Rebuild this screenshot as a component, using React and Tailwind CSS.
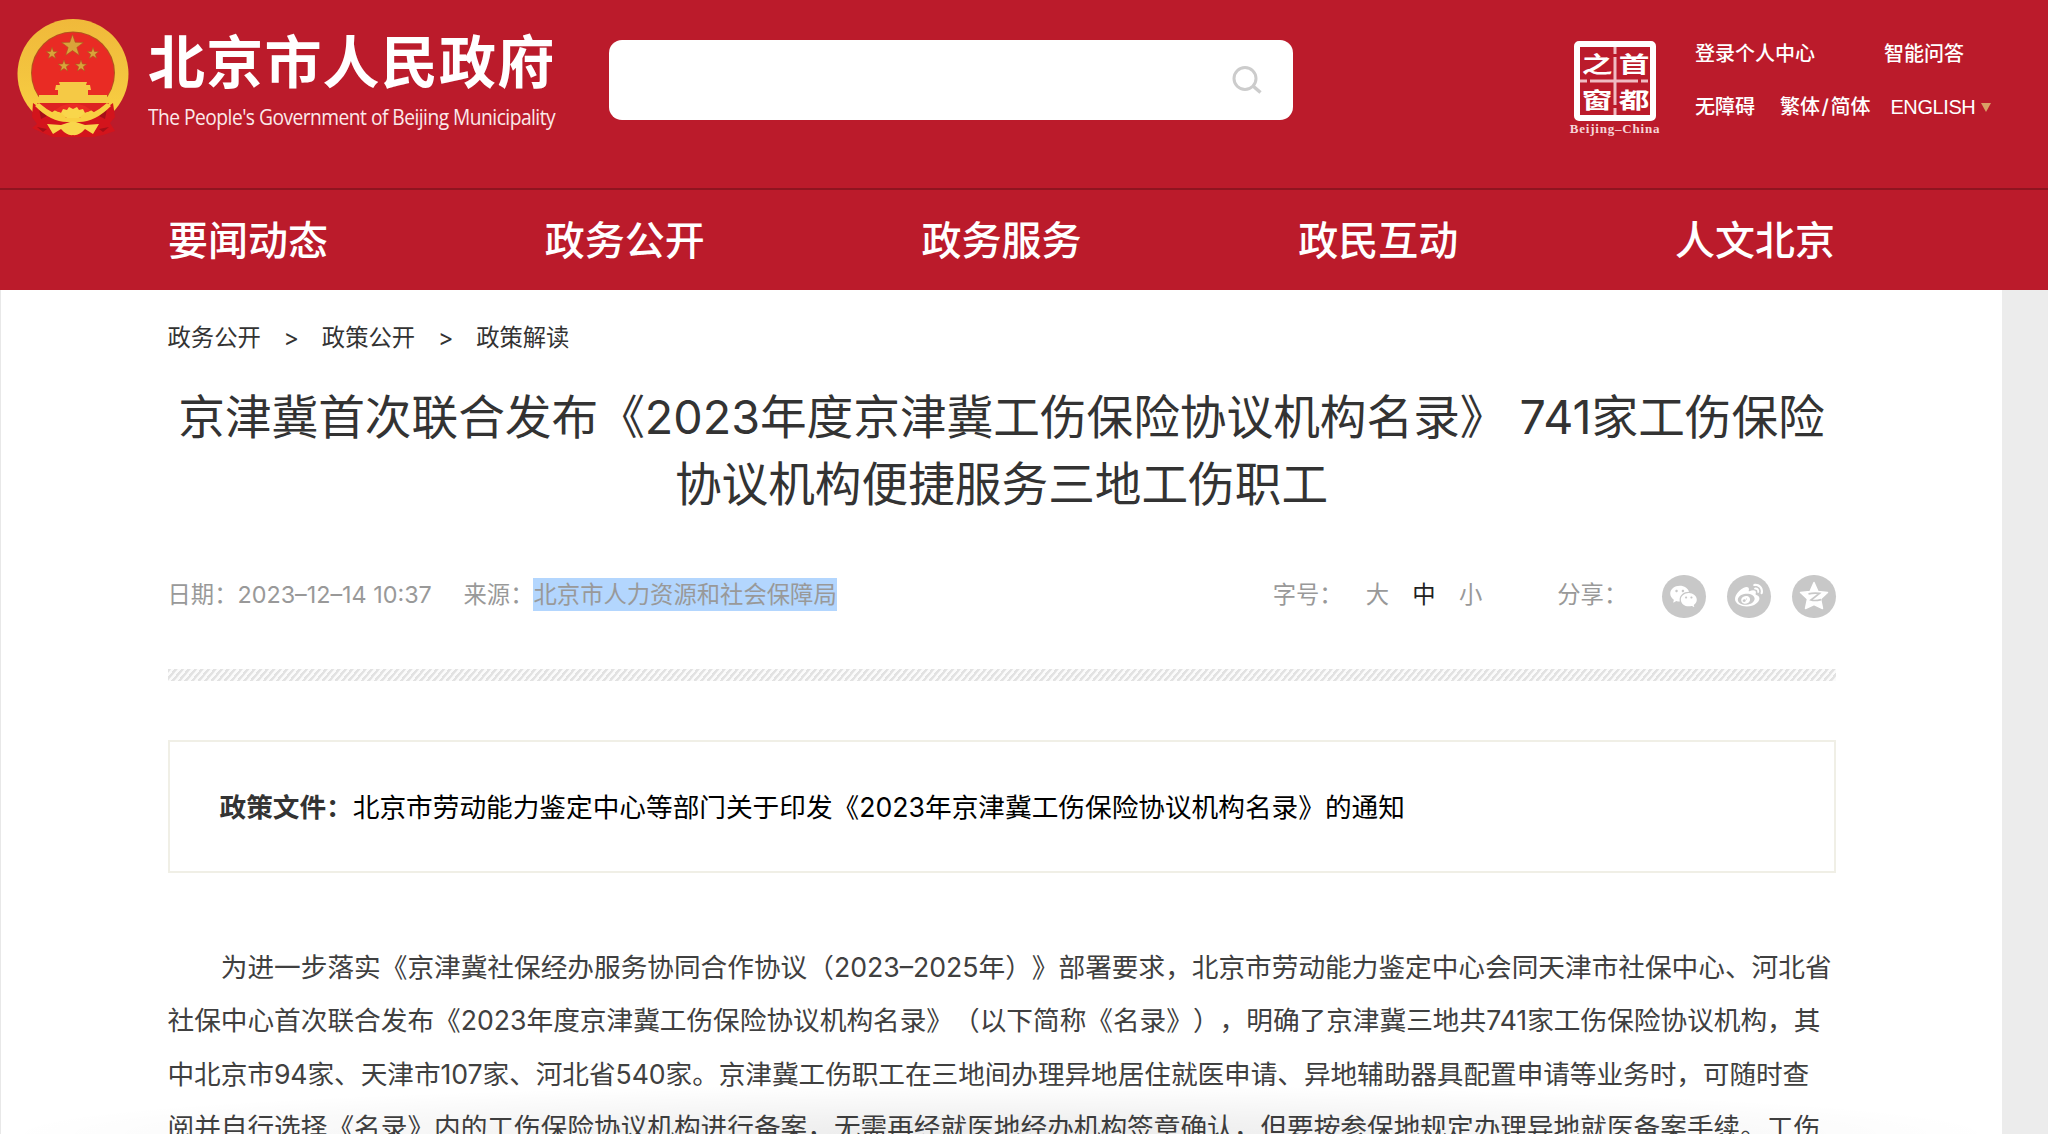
import { RiWechatFill } from "react-icons/ri";
import { FaWeibo } from "react-icons/fa";

const navItems = ["要闻动态", "政务公开", "政务服务", "政民互动", "人文北京"];
const crumbs = ["政务公开", "政策公开", "政策解读"];

const emblemStars = [
  { x: 53.5, y: 27, r: 11.5 },
  { x: 33, y: 34.5, r: 6.2 },
  { x: 74, y: 34.5, r: 6.2 },
  { x: 45, y: 47, r: 6.2 },
  { x: 62, y: 47, r: 6.2 },
];

const paragraph = [
  { text: "为进一步落实《京津冀社保经办服务协同合作协议（2023–2025年）》部署要求，北京市劳动能力鉴定中心会同天津市社保中心、河北省", className: "pl-[53.3px]" },
  { text: "社保中心首次联合发布《2023年度京津冀工伤保险协议机构名录》（以下简称《名录》），明确了京津冀三地共741家工伤保险协议机构，其", className: "" },
  { text: "中北京市94家、天津市107家、河北省540家。京津冀工伤职工在三地间办理异地居住就医申请、异地辅助器具配置申请等业务时，可随时查", className: "tracking-[-0.06px]" },
  { text: "阅并自行选择《名录》内的工伤保险协议机构进行备案，无需再经就医地经办机构签章确认，但要按参保地规定办理异地就医备案手续。工伤", className: "" },
];

function starPoints(cx, cy, r) {
  return Array.from({ length: 10 }, (_, i) => {
    const radius = i % 2 ? r * 0.4 : r;
    const angle = (Math.PI / 5) * i - Math.PI / 2;
    return `${cx + radius * Math.cos(angle)},${cy + radius * Math.sin(angle)}`;
  }).join(" ");
}

function Emblem() {
  return (
    <svg className="shrink-0" width="112" height="120" viewBox="-2 0 112 120">
      <defs>
        <linearGradient id="gold" x1="0" y1="0" x2="0" y2="1">
          <stop offset="0" stopColor="#f0b93a" />
          <stop offset="0.5" stopColor="#f3c43f" />
          <stop offset="1" stopColor="#fbd343" />
        </linearGradient>
      </defs>
      <ellipse cx="54" cy="55" rx="55.5" ry="55" fill="url(#gold)" />
      <path d="M14 84 L13 98 L18 105 L13 109 L24 114 L34 118 H74 L84 116 L96 112 L91 104 L96 98 L94 84 Q84 92 72 98 H36 Q24 92 14 84Z" fill="#d3141c" />
      <path d="M20 90 L28 97 L22 100Z M88 90 L80 97 L86 100Z M18 108 L28 110 L24 113Z M90 108 L80 110 L84 113Z" fill="#a50f18" />
      <ellipse cx="54" cy="54" rx="42" ry="41.5" fill="#b3541e" />
      <ellipse cx="54" cy="54.5" rx="41" ry="41" fill="#e92b24" />
      {emblemStars.map((s) => (
        <polygon key={`${s.x}-${s.y}`} points={starPoints(s.x, s.y, s.r)} fill="#d9a33a" stroke="#a9591d" strokeWidth="0.6" />
      ))}
      <path d="M40 63 H68 L67 66 H71 L72 71 H69 V76 H88 V84 H20 V76 H39 V71 H36 L37 66 H41Z" fill="#f5c945" />
      <path d="M18 84 H90 Q84 92 76 94 L66 87 Q54 82 42 87 L32 94 Q24 92 18 84Z" fill="#dd2222" />
      <path d="M20 84 Q35 97 50 99 H58 Q73 97 88 84 L92 87 Q76 103 60 103 H48 Q32 103 16 87Z" fill="#f8cf42" />
      <path d="M42 94 L44 90 L48 91 L50 88 L54 90 L58 88 L60 91 L64 90 L66 94 L60 99 H48Z" fill="#f9d64b" />
      <path d="M28 105 L42 106 L48 104 Q54 101 60 104 L66 106 L80 105 L74 115 L66 110 Q60 117 54 116 Q48 117 42 110 L34 115Z" fill="#f9d64b" />
    </svg>
  );
}

function Seal() {
  return (
    <div className="flex w-[92px] flex-col items-center">
      <svg width="82" height="80" viewBox="0 0 82 80" fill="none" stroke="#fff">
        <rect x="3" y="3" width="76" height="74" rx="2" strokeWidth="6" />
        <path d="M41 6 V74 M6 40 H76" stroke="#f0bcc2" strokeWidth="3" strokeDasharray="7 3 48 3" />
        <g fill="#fff" stroke="none" fontFamily="Noto Sans CJK SC, sans-serif" fontWeight="700" fontSize="26" textAnchor="middle">
          <text transform="translate(23 31) scale(1.18 0.84)">之</text>
          <text transform="translate(60 31) scale(1.18 0.84)">首</text>
          <text transform="translate(23 67) scale(1.18 0.84)">窗</text>
          <text transform="translate(60 67) scale(1.18 0.84)">都</text>
        </g>
      </svg>
      <span className="mt-px font-['Liberation_Serif',serif] text-[13px] leading-[13px] font-bold tracking-[0.8px] whitespace-nowrap text-[#f6d5d8]">
        Beijing–China
      </span>
    </div>
  );
}

function QzoneIcon() {
  return (
    <svg width="30" height="30" viewBox="0 0 30 30">
      <path d="M15 1.5 L19 10.5 L28.5 11.5 L21.5 18 L23.5 27.5 L15 23.5 L6.5 27.5 L8.5 18 L1.5 11.5 L11 10.5Z" fill="#fff" stroke="#fff" strokeWidth="1.5" strokeLinejoin="round" />
      <path d="M9.5 12.8 Q15 11.6 20.5 12.4 L12 19 Q16 20.2 22 18.6" fill="none" stroke="#c8c8c8" strokeWidth="1.7" />
    </svg>
  );
}

function ShareButton({ children }) {
  return <a className="flex size-[43.3px] items-center justify-center rounded-full bg-[#c8c8c8] text-white">{children}</a>;
}

function Header() {
  return (
    <header className="bg-[#bb1b2b] text-white">
      <div className="flex h-[188px] items-start">
        <div className="mt-[19px] ml-[17px] flex w-[592px] gap-[19px]">
          <Emblem />
          <div className="w-[420px] pt-[11px]">
            <div className="text-[57px] leading-[66px] font-bold tracking-[1.2px] whitespace-nowrap">北京市人民政府</div>
            <div className="mt-[5px] origin-left scale-x-[0.873] font-['Open_Sans',sans-serif] text-[22px] leading-[30px] font-medium tracking-[-0.6px] whitespace-nowrap text-[#fbe9ea]">
              The People's Government of Beijing Municipality
            </div>
          </div>
        </div>
        <div className="mt-[40px] flex h-[80px] w-[684px] items-center justify-end rounded-[13px] bg-white pr-[31px]">
          <svg width="30" height="28" viewBox="0 0 30 28" fill="none" stroke="#ccc" strokeWidth="3">
            <circle cx="13" cy="12.5" r="11" />
            <path d="M21 20 L28.5 26.5" strokeWidth="3.5" />
          </svg>
        </div>
        <div className="mt-[41px] ml-[276px]">
          <Seal />
        </div>
        <div className="mt-[40px] ml-[34px] flex flex-col gap-[25px] text-[20px] leading-[28px] font-medium whitespace-nowrap">
          <div className="flex gap-[69px]">
            <a>登录个人中心</a>
            <a>智能问答</a>
          </div>
          <div className="flex items-center">
            <a>无障碍</a>
            <a className="ml-[25px]">
              繁体<span className="mx-[1.5px]">/</span>简体
            </a>
            <a className="ml-[20px] font-['Liberation_Sans',sans-serif] font-normal tracking-[-0.4px]">ENGLISH</a>
            <svg className="ml-[6px]" width="10" height="9" viewBox="0 0 10 9">
              <path d="M0 0 H10 L5 9Z" fill="#d9a066" />
            </svg>
          </div>
        </div>
      </div>
      <nav className="flex h-[102px] justify-between border-t-2 border-[#8f1420] pr-[213px] pl-[168px] text-[40px] leading-[101px] font-medium">
        {navItems.map((item) => (
          <a key={item}>{item}</a>
        ))}
      </nav>
    </header>
  );
}

function MetaRow() {
  return (
    <div className="flex h-[44px] items-center text-[23.33px] leading-[33px] whitespace-nowrap text-[#999]">
      <div className="-mt-[3px] flex">
        <span className="w-[296px]">日期：2023–12–14 10:37</span>
        <span>来源：</span>
        <span className="bg-[#b3d6fe]">北京市人力资源和社会保障局</span>
      </div>
      <div className="ml-auto flex items-center">
        <div className="-mt-[3px] flex">
          <span className="w-[93px]">字号：</span>
          <div className="flex gap-[23.3px]">
            <a>大</a>
            <a className="text-[#222]">中</a>
            <a>小</a>
          </div>
          <span className="ml-[75px] w-[105px]">分享：</span>
        </div>
        <div className="flex gap-[21.7px]">
          <ShareButton>
            <RiWechatFill size={29} />
          </ShareButton>
          <ShareButton>
            <FaWeibo size={28} />
          </ShareButton>
          <ShareButton>
            <QzoneIcon />
          </ShareButton>
        </div>
      </div>
    </div>
  );
}

export default function App() {
  return (
    <div className="relative flex h-[1134px] w-[2048px] flex-col overflow-hidden bg-[#ececec] font-[Inter,'Noto_Sans_CJK_SC',sans-serif] [text-spacing-trim:space-all]">
      <Header />
      <main className="w-[2002px] flex-1 border-l border-[#e8e8e8] bg-white pr-[166.5px] pl-[166.5px]">
        <div className="flex pt-[31px] text-[23.33px] leading-[33px] text-[#333]">
          {crumbs.map((crumb, i) => (
            <div key={crumb} className="flex">
              {i > 0 && <span className="w-[61px] text-center">&gt;</span>}
              <a>{crumb}</a>
            </div>
          ))}
        </div>
        <h1 className="mt-[30px] text-center text-[46.67px] leading-[66.67px] whitespace-nowrap text-[#333]">
          京津冀首次联合发布《2023年度京津冀工伤保险协议机构名录》 741家工伤保险
          <br />
          协议机构便捷服务三地工伤职工
        </h1>
        <div className="mt-[57px]">
          <MetaRow />
        </div>
        <div className="mt-[50.5px] h-[12.5px] bg-[repeating-linear-gradient(130deg,#e2e2e2_0_2px,#fbfbfb_3px_5px)]" />
        <div className="mt-[59px] flex h-[133px] items-center border-2 border-[#f0efe6] pl-[50px] text-[26.67px] whitespace-nowrap">
          <b className="text-[#333]">政策文件：</b>
          <a className="text-black">北京市劳动能力鉴定中心等部门关于印发《2023年京津冀工伤保险协议机构名录》的通知</a>
        </div>
        <div className="mt-[67.5px] text-[26.67px] leading-[53.33px] whitespace-nowrap text-[#404040]">
          {paragraph.map((line) => (
            <p key={line.text} className={line.className}>
              {line.text}
            </p>
          ))}
        </div>
      </main>
      {/* soft shade along the bottom edge */}
      <div className="absolute bottom-0 left-0 h-[50px] w-[2002px] bg-[radial-gradient(ellipse_50%_100%_at_50%_100%,rgba(0,0,0,0.08),transparent)]" />
    </div>
  );
}
